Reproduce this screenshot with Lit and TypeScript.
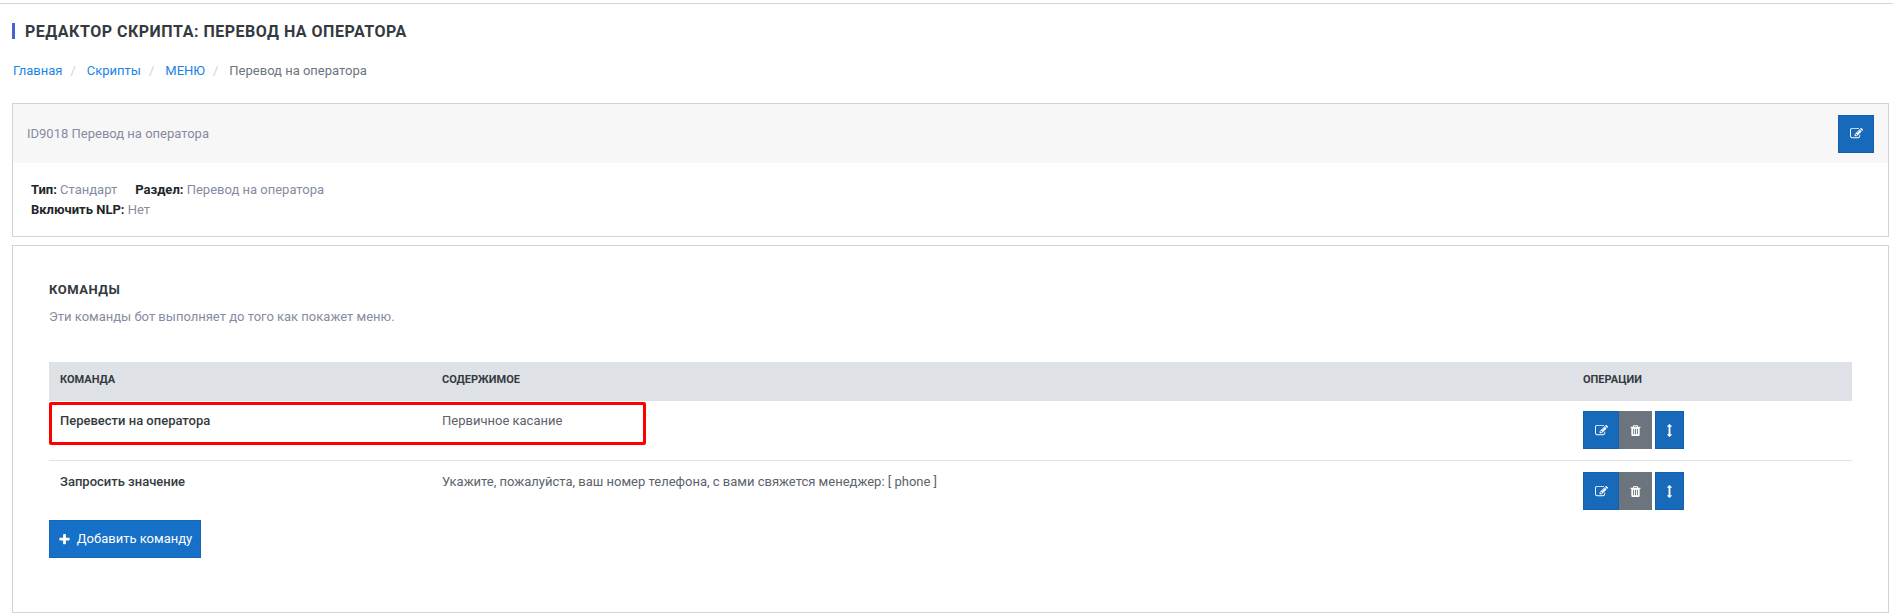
import { LitElement, html, css, svg } from "lit";
import { customElement, property } from "lit/decorators.js";

const ICONS: Record<string, string> = {
  edit: "M888 1184l116-116-152-152-116 116v56h96v96h56zm440-720q-16-16-33 1l-350 350q-17 17-1 33t33-1l350-350q17-17 1-33zm80 594v190q0 119-84.5 203.5t-203.5 84.5h-832q-119 0-203.5-84.5t-84.5-203.5v-832q0-119 84.5-203.5t203.5-84.5h832q63 0 117 25 15 7 18 23 3 17-9 29l-49 49q-14 14-32 8-23-6-45-6h-832q-66 0-113 47t-47 113v832q0 66 47 113t113 47h832q66 0 113-47t47-113v-126q0-13 9-22l64-64q15-15 35-7t20 29zm-96-738l288 288-672 672h-288v-288zm444 132l-92 92-288-288 92-92q28-28 68-28t68 28l152 152q28 28 28 68t-28 68z",
  trash: "M704 1376v-704q0-14-9-23t-23-9h-64q-14 0-23 9t-9 23v704q0 14 9 23t23 9h64q14 0 23-9t9-23zm256 0v-704q0-14-9-23t-23-9h-64q-14 0-23 9t-9 23v704q0 14 9 23t23 9h64q14 0 23-9t9-23zm256 0v-704q0-14-9-23t-23-9h-64q-14 0-23 9t-9 23v704q0 14 9 23t23 9h64q14 0 23-9t9-23zm-544-992h448l-48-117q-7-9-17-11h-317q-10 2-17 11zm928 32v64q0 14-9 23t-23 9h-96v948q0 83-47 143.5t-113 60.5h-832q-66 0-113-58.5t-47-141.5v-952h-96q-14 0-23-9t-9-23v-64q0-14 9-23t23-9h309l70-167q15-37 54-63t79-26h320q40 0 79 26t54 63l70 167h309q14 0 23 9t9 23z",
  plus: "M1600 736v192q0 40-28 68t-68 28h-416v416q0 40-28 68t-68 28h-192q-40 0-68-28t-28-68v-416h-416q-40 0-68-28t-28-68v-192q0-40 28-68t68-28h416v-416q0-40 28-68t68-28h192q40 0 68 28t28 68v416h416q40 0 68 28t28 68z",
  move: "M1216 320q0 26-19 45t-45 19h-128v1024h128q26 0 45 19t19 45-19 45l-256 256q-19 19-45 19t-45-19l-256-256q-19-19-19-45t19-45 45-19h128v-1024h-128q-26 0-45-19t-19-45 19-45l256-256q19-19 45-19t45 19l256 256q19 19 19 45z",
};

@customElement("ui-icon")
export class UiIcon extends LitElement {
  @property() name = "edit";
  static styles = css`
    :host { display: block; width: 13px; height: 13px; }
    .glyph { display: block; width: 13px; height: 13px; fill: currentColor; overflow: visible; }
  `;
  render() {
    return html`<svg class="glyph" viewBox="0 0 1792 1792">${svg`<path d=${ICONS[this.name]}></path>`}</svg>`;
  }
}

interface Command {
  name: string;
  content: string;
  marked?: boolean;
}

const COMMANDS: Command[] = [
  { name: "Перевести на оператора", content: "Первичное касание", marked: true },
  { name: "Запросить значение", content: "Укажите, пожалуйста, ваш номер телефона, с вами свяжется менеджер: [ phone ]" },
];

@customElement("app-root")
export class AppRoot extends LitElement {
  static styles = css`
    :host {
      display: block;
      height: 616px;
      overflow: hidden;
      background: #fff;
      font: 400 13px/19.5px Roboto, sans-serif;
      color: #868ba1;
    }
    * { box-sizing: border-box; }
    .topline { height: 4px; border-bottom: 1px solid #ced4da; }
    .page { padding: 19px 4px 0 12px; }
    .title {
      margin: 0;
      height: 16px;
      border-left: 3px solid #4662d4;
      padding-left: 10px;
      font-size: 16px;
      line-height: 17px;
      font-weight: 700;
      letter-spacing: 0.5px;
      color: #343a40;
      white-space: nowrap;
    }
    .crumbs { display: flex; margin: 22px 0 0; padding-left: 1px; height: 20px; }
    .crumb { color: #6c757d; }
    .crumb.link { color: #1b84e7; text-decoration: none; }
    .sep { color: #ced4da; padding: 0 11px 0 8px; }
    .card { border: 1px solid #ced4da; }
    .info { margin-top: 22px; height: 134px; }
    .head {
      height: 59px;
      background: #f7f7f7;
      display: flex;
      align-items: center;
      justify-content: space-between;
      padding: 0 14px;
    }
    .facts { padding: 17px 18px; }
    .row { display: flex; gap: 18px; }
    .facts b { color: #212529; font-weight: 700; }
    .commands { margin-top: 8px; height: 368px; padding: 34px 36px 0; }
    .subtitle { margin: 0; font-size: 13px; line-height: 20px; font-weight: 700; letter-spacing: 0.5px; color: #343a40; }
    .hint { margin: 7px 0 0; height: 20px; }
    .table { margin-top: 35px; }
    .tr { display: grid; grid-template-columns: 382px 1141px 1fr; padding-left: 11px; }
    .thead {
      height: 39px;
      background: #dee2e6;
      font-size: 11px;
      line-height: 36px;
      font-weight: 700;
      color: #343a40;
    }
    .body { position: relative; height: 60px; padding-top: 10px; }
    .body + .body { border-top: 1px solid #dee2e6; margin-top: -1px; padding-top: 11px; }
    .name { font-weight: 500; color: #343a40; }
    .content { color: #5b636b; }
    .marker {
      position: absolute;
      left: 0;
      top: 1px;
      width: 597px;
      height: 43px;
      border: 3px solid #f00;
      border-radius: 2px;
    }
    .ops { display: flex; }
    .btn {
      height: 38px;
      padding: 0;
      display: flex;
      align-items: center;
      justify-content: center;
      border: 1px solid #145fae;
      background: #1769ba;
      color: #fff;
      font: 400 13px/20px Roboto, sans-serif;
    }
    .edit { width: 36px; }
    .trash { width: 33px; background: #6c757d; border-color: #6c757d; }
    .move { width: 29px; margin-left: 3px; }
    .add { width: 152px; gap: 6px; background: #1670c8; border-color: #1467b7; }
  `;

  render() {
    return html`
      <div class="topline"></div>
      <main class="page">
        <h1 class="title">РЕДАКТОР СКРИПТА: ПЕРЕВОД НА ОПЕРАТОРА</h1>
        <nav class="crumbs">
          ${["Главная", "Скрипты", "МЕНЮ"].map(
            (t) => html`<a class="crumb link">${t}</a><span class="sep">/</span>`
          )}
          <span class="crumb">Перевод на оператора</span>
        </nav>
        <section class="card info">
          <div class="head">
            <span>ID9018 Перевод на оператора</span>
            <button class="btn edit"><ui-icon name="edit"></ui-icon></button>
          </div>
          <div class="facts">
            <div class="row">
              <span><b>Тип:</b> Стандарт</span>
              <span><b>Раздел:</b> Перевод на оператора</span>
            </div>
            <div class="row"><span><b>Включить NLP:</b> Нет</span></div>
          </div>
        </section>
        <section class="card commands">
          <h2 class="subtitle">КОМАНДЫ</h2>
          <p class="hint">Эти команды бот выполняет до того как покажет меню.</p>
          <div class="table">
            <div class="tr thead"><span>КОМАНДА</span><span>СОДЕРЖИМОЕ</span><span>ОПЕРАЦИИ</span></div>
            ${COMMANDS.map(
              (c) => html`<div class="tr body">
                <span class="name">${c.name}</span>
                <span class="content">${c.content}</span>
                <div class="ops">
                  <button class="btn edit"><ui-icon name="edit"></ui-icon></button>
                  <button class="btn trash"><ui-icon name="trash"></ui-icon></button>
                  <button class="btn move"><ui-icon name="move"></ui-icon></button>
                </div>
                ${c.marked ? html`<div class="marker"></div>` : ""}
              </div>`
            )}
          </div>
          <button class="btn add"><ui-icon name="plus"></ui-icon>Добавить команду</button>
        </section>
      </main>
    `;
  }
}
